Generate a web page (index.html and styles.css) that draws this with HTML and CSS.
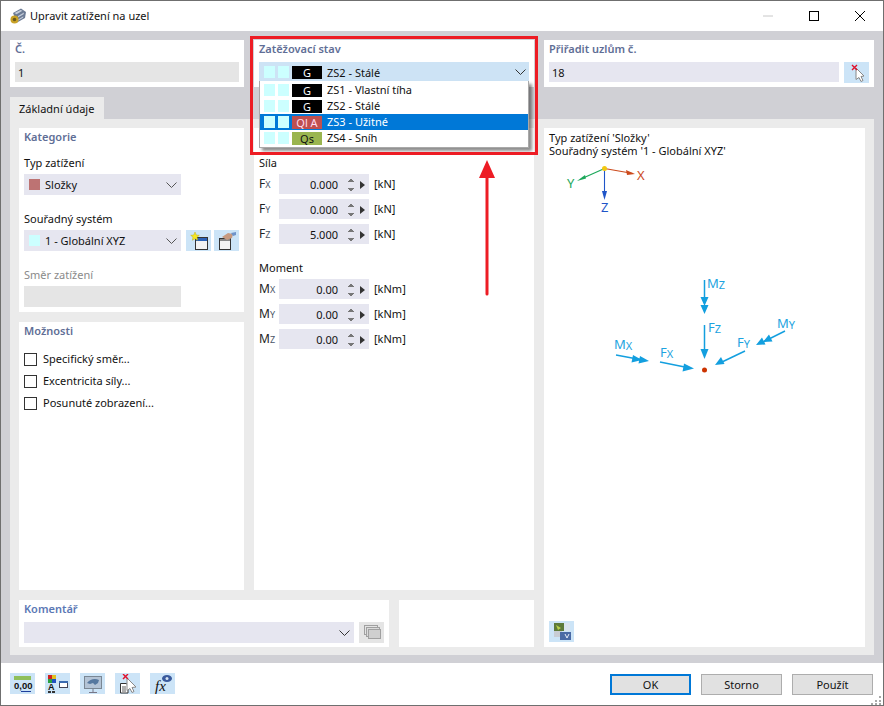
FILE: index.html
```html
<!DOCTYPE html>
<html lang="cs">
<head>
<meta charset="utf-8">
<title>Upravit zatížení na uzel</title>
<link rel="stylesheet" href="styles.css">
</head>
<body>
<div class="dialog">
  <header class="titlebar">
    <svg class="app-icon" width="18" height="18" viewBox="0 0 18 18"><path d="M4 6 12 1.500l5 3.500-1 6-8 4.500z" fill="#6b7a94"/><path d="M5.500 6l6-3 2 .8-6 3.500zM9 9l6-3.500-.4 1.700-5.600 3.300zM9 12.500l5.400-3.200-.3 1.500-5.300 3z" fill="#c3ccd9"/><circle cx="5.500" cy="12.500" r="4" fill="#c9a227"/><circle cx="5.500" cy="12.500" r="1.800" fill="#6b5a1c"/></svg>
    <span class="title-text">Upravit zatížení na uzel</span>
    <div class="window-controls">
      <svg width="12" height="12" viewBox="0 0 12 12"><path d="M1 6h10" stroke="#c8c8c8"/></svg>
      <svg width="12" height="12" viewBox="0 0 12 12"><rect x="1.500" y="1.500" width="9" height="9" fill="none" stroke="#000"/></svg>
      <svg width="12" height="12" viewBox="0 0 12 12"><path d="M1 1l10 10M11 1 1 11" stroke="#000"/></svg>
    </div>
  </header>

  <main class="body">
    <div class="top-row">
      <section class="card">
        <div class="card-title">Č.</div>
        <div class="input disabled">1</div>
      </section>
      <section class="card lc-card">
        <div class="card-title">Zatěžovací stav</div>
        <div class="input lc-field">
          <i class="tile"></i><i class="tile"></i><b class="badge badge-g">G</b><span>ZS2 - Stálé</span>
          <svg class="chevron" width="11" height="6" viewBox="0 0 11 6"><path d="M.5.5l5 5 5-5" fill="none" stroke="#333"/></svg>
        </div>
        <ul class="lc-list">
          <li class="lc-row"><i class="tile"></i><i class="tile"></i><b class="badge badge-g">G</b><span>ZS1 - Vlastní tíha</span></li>
          <li class="lc-row"><i class="tile"></i><i class="tile"></i><b class="badge badge-g">G</b><span>ZS2 - Stálé</span></li>
          <li class="lc-row selected"><i class="tile"></i><i class="tile"></i><b class="badge badge-q">Ql A</b><span>ZS3 - Užitné</span></li>
          <li class="lc-row"><i class="tile"></i><i class="tile"></i><b class="badge badge-s">Qs</b><span>ZS4 - Sníh</span></li>
        </ul>
      </section>
      <section class="card">
        <div class="card-title">Přiřadit uzlům č.</div>
        <div class="input-with-btn">
          <div class="input grow">18</div>
          <button class="icon-btn" type="button"><svg width="20" height="20" viewBox="0 0 20 20"><path d="M9 5l8 8-3 .5 2 4-2 1-2-4-3 2z" fill="#fff" stroke="#888"/><path d="M5 2l5 5M10 2 5 7" stroke="#e0112b" stroke-width="1.400"/></svg></button>
        </div>
      </section>
    </div>

    <div class="tab">Základní údaje</div>

    <div class="panel">
      <div class="left-area">
        <div class="columns">
          <div class="col-left">
            <section class="card card-cat">
              <div class="card-title">Kategorie</div>
              <label class="field-label first">Typ zatížení</label>
              <div class="select w157"><i class="swatch swatch-red"></i><span>Složky</span>
                <svg class="chevron" width="11" height="6" viewBox="0 0 11 6"><path d="M.5.5l5 5 5-5" fill="none" stroke="#555"/></svg></div>
              <label class="field-label">Souřadný systém</label>
              <div class="select-row">
                <div class="select w157"><i class="swatch swatch-cyan"></i><span>1 - Globální XYZ</span>
                  <svg class="chevron" width="11" height="6" viewBox="0 0 11 6"><path d="M.5.5l5 5 5-5" fill="none" stroke="#555"/></svg></div>
                <button class="icon-btn" type="button"><svg width="20" height="20" viewBox="0 0 20 20"><rect x="6.500" y="6.500" width="12" height="12" fill="#f2f2f2" stroke="#333"/><rect x="7" y="7" width="11" height="3" fill="#2a62b8"/><path d="M6 1l1.300 3 3 .3-2.300 2 .7 3L6 7.800 3.300 9.300 4 6.300 1.700 4.300l3-.3z" fill="#f5e625" stroke="#b3a100" stroke-width=".4"/></svg></button>
                <button class="icon-btn" type="button"><svg width="20" height="20" viewBox="0 0 20 20"><rect x="2.500" y="7.500" width="11" height="11" fill="#f2f2f2" stroke="#333"/><rect x="3" y="8" width="10" height="2" fill="#888"/><path d="M5 6l6-4 5 1-1 4-5 2z" fill="#c79a80"/><path d="M14 2l5-1v3l-3 1z" fill="#6f93c9"/></svg></button>
              </div>
              <label class="field-label muted">Směr zatížení</label>
              <div class="input disabled w157 tall"></div>
            </section>
            <section class="card card-opt">
              <div class="card-title">Možnosti</div>
              <div class="checks">
                <label class="check"><i class="box"></i>Specifický směr...</label>
                <label class="check"><i class="box"></i>Excentricita síly...</label>
                <label class="check"><i class="box"></i>Posunuté zobrazení...</label>
              </div>
            </section>
          </div>
          <section class="card col-mid">
            <label class="field-label first">Síla</label>
            <div class="force-row"><span class="sym">F<small>X</small></span><div class="num">0.000<i class="spin"></i><i class="more"></i></div><span class="unit">[kN]</span></div>
            <div class="force-row"><span class="sym">F<small>Y</small></span><div class="num">0.000<i class="spin"></i><i class="more"></i></div><span class="unit">[kN]</span></div>
            <div class="force-row"><span class="sym">F<small>Z</small></span><div class="num">5.000<i class="spin"></i><i class="more"></i></div><span class="unit">[kN]</span></div>
            <label class="field-label">Moment</label>
            <div class="force-row"><span class="sym">M<small>X</small></span><div class="num">0.00<i class="spin"></i><i class="more"></i></div><span class="unit">[kNm]</span></div>
            <div class="force-row"><span class="sym">M<small>Y</small></span><div class="num">0.00<i class="spin"></i><i class="more"></i></div><span class="unit">[kNm]</span></div>
            <div class="force-row"><span class="sym">M<small>Z</small></span><div class="num">0.00<i class="spin"></i><i class="more"></i></div><span class="unit">[kNm]</span></div>
          </section>
        </div>
        <div class="bottom-row">
          <section class="card card-comment">
            <div class="card-title accent">Komentář</div>
            <div class="input-with-btn">
              <div class="select grow"><svg class="chevron" width="11" height="6" viewBox="0 0 11 6"><path d="M.5.5l5 5 5-5" fill="none" stroke="#333"/></svg></div>
              <button class="icon-btn gray" type="button"><svg width="20" height="18" viewBox="0 0 20 18"><rect x="2.500" y="1.500" width="13" height="9" fill="#e4e4e4" stroke="#a0a0a0"/><rect x="4.500" y="3.500" width="13" height="9" fill="#dadada" stroke="#a0a0a0"/><rect x="6.500" y="5.500" width="12" height="9" fill="#cfcfcf" stroke="#a0a0a0"/></svg></button>
            </div>
          </section>
          <section class="card card-spare"></section>
        </div>
      </div>

      <section class="card pane">
        <p class="pane-text">Typ zatížení 'Složky'<br>Souřadný systém '1 - Globální XYZ'</p>
        <svg class="diagram" width="321" height="224" viewBox="544 160 321 224">
          <g stroke-width="1.100">
            <path d="M604.500 168.500 633 173.500" stroke="#cc4a1c"/><path d="M635 174l-9-4 1 5z" fill="#cc4a1c"/>
            <path d="M604.500 168.500 582 178.500" stroke="#1ca85a"/><path d="M577 181l8-6 1 3.600z" fill="#1ca85a"/>
            <path d="M604.500 168.500V196" stroke="#1f55c8"/><path d="M604.500 200l-2.500-9h5z" fill="#1f55c8"/>
          </g>
          <circle cx="604.500" cy="168.500" r="2.500" fill="#f2c811"/>
          <text class="axis ax-x" x="637" y="180">X</text>
          <text class="axis ax-y" x="567" y="188">Y</text>
          <text class="axis ax-z" x="601" y="212">Z</text>
          <g stroke="#139fdf" stroke-width="1.500" fill="none">
            <path d="M704.500 280V302"/><path d="M704.500 325V352"/>
            <path d="M660 362 686 367.300"/><path d="M616 355 640 359.500"/>
            <path d="M745 351 722 362"/><path d="M785 331 763 342"/>
          </g>
          <g fill="#139fdf">
            <path d="M704.500 306l-4-9h8zM704.500 314l-4-9h8z"/>
            <path d="M704.500 359l-4-10h8z"/>
            <path d="M694 368.500l-10-5-1.500 8z"/>
            <path d="M649 361l-9-5-1.500 7.500zM642 360l-9-5-1.500 7.500z"/>
            <path d="M715 365l6-8 3.500 7z"/>
            <path d="M756 345l6-7.500 3.500 7zM763 342l6-7.500 3.500 7z"/>
          </g>
          <circle cx="704.500" cy="370" r="2.500" fill="#cc3300"/>
          <text class="load" x="707" y="288">M<tspan class="load-sub" dy="1">Z</tspan></text>
          <text class="load" x="708" y="332">F<tspan class="load-sub" dy="1">Z</tspan></text>
          <text class="load" x="660" y="357">F<tspan class="load-sub" dy="1">X</tspan></text>
          <text class="load" x="614" y="349">M<tspan class="load-sub" dy="1">X</tspan></text>
          <text class="load" x="737" y="347">F<tspan class="load-sub" dy="1">Y</tspan></text>
          <text class="load" x="777" y="328">M<tspan class="load-sub" dy="1">Y</tspan></text>
        </svg>
        <button class="icon-btn pane-btn" type="button"><svg width="20" height="20" viewBox="0 0 20 20"><rect x="2" y="1" width="10" height="8" fill="#5d7a3a"/><path d="M4 3l5 3-3 2z" fill="#b8d14a"/><rect x="2" y="9" width="8" height="6" fill="#c8ccd4"/><rect x="12" y="1" width="6" height="8" fill="#d9e3ee"/><rect x="8" y="10" width="11" height="8" fill="#4a6aa5"/><path d="M13 12l2 4 2-4" fill="none" stroke="#e8eef8"/></svg></button>
      </section>
    </div>
  </main>

  <footer class="footer">
    <div class="tools">
      <button class="icon-btn" type="button"><svg width="20" height="20" viewBox="0 0 20 20"><rect x="1" y="2" width="17" height="4" fill="#8fbf5a"/><text class="tool-num" x="1" y="15">0,00</text><path d="M8 17.500h10" stroke="#1f3f9c"/></svg></button>
      <button class="icon-btn" type="button"><svg width="22" height="20" viewBox="0 0 22 20"><rect x="1" y="1" width="4" height="4" fill="#d02020"/><rect x="5" y="1" width="4" height="4" fill="#e0c020"/><rect x="1" y="5" width="4" height="4" fill="#2aa040"/><rect x="5" y="5" width="4" height="4" fill="#2050c0"/><text class="tool-a" x="1" y="16">A</text><rect x="1" y="17" width="3" height="2" fill="#333"/><rect x="5" y="17" width="3" height="2" fill="#333"/><rect x="12.500" y="7.500" width="8" height="6" fill="#fff" stroke="#445"/><rect x="12" y="7" width="9" height="2" fill="#3a6ab0"/></svg></button>
      <button class="icon-btn" type="button"><svg width="20" height="20" viewBox="0 0 20 20"><rect x="1.500" y="2.500" width="17" height="12" fill="#b4c4d6" stroke="#7a8794"/><path d="M4 9c3-4 8-5 12-3l-1 3-3 2-2-2-3 1z" fill="#56789f"/><path d="M10 15v3M6 18.500h8" stroke="#778"/></svg></button>
      <button class="icon-btn" type="button"><svg width="20" height="20" viewBox="0 0 20 20"><path d="M2.500 9.500h6l1.500 2v7.500h-7.500z" fill="#fff" stroke="#333"/><path d="M4 13h4M4 15h4M4 17h4" stroke="#333" stroke-width=".8"/><path d="M9 4l9 9-4 .5 2 4-2 1-2-4-3 2z" fill="#fff" stroke="#888"/><path d="M5 0l5 5M10 0 5 5" stroke="#e0112b" stroke-width="1.400"/></svg></button>
      <button class="icon-btn" type="button"><svg width="20" height="20" viewBox="0 0 20 20"><text class="tool-f" x="2" y="17">fx</text><ellipse cx="14" cy="4.500" rx="5" ry="3.500" fill="#3a5a9c"/><circle cx="14" cy="4.500" r="1.500" fill="#d8e4f4"/></svg></button>
    </div>
    <div class="actions">
      <button class="btn btn-default" type="button">OK</button>
      <button class="btn" type="button">Storno</button>
      <button class="btn" type="button">Použít</button>
    </div>
    <svg class="grip" width="11" height="10" viewBox="0 0 11 10"><path d="M8 1h2v2H8zM4 5h2v2H4zM8 5h2v2H8zM0 8h2v2H0zM4 8h2v2H4zM8 8h2v2H8z" fill="#a8a8a8"/></svg>
  </footer>
</div>

<div class="callout"></div>
<svg class="callout-arrow" width="18" height="138" viewBox="0 0 18 138"><path d="M9 0 17 18H10.500V134a1.500 1.500 0 0 1-3 0V18H1z" fill="#ed1c24"/></svg>
</body>
</html>
```

FILE: styles.css
```css
* { box-sizing: border-box; }
html, body { margin: 0; padding: 0; }
body {
  position: relative;
  width: 884px;
  height: 706px;
  overflow: hidden;
  font-family: "Noto Sans", "Open Sans", "Liberation Sans", sans-serif;
  font-size: 11px;
  line-height: 16px;
  color: #111;
  background: #fff;
}
i, b { font-style: normal; font-weight: normal; }
small { font-size: 9px; }
ul { list-style: none; margin: 0; padding: 0; }
p { margin: 0; }
label { display: block; }

.dialog {
  width: 884px;
  height: 706px;
  display: flex;
  flex-direction: column;
  border: 1px solid #6f6f6f;
}

/* title bar */
.titlebar {
  height: 30px;
  flex: none;
  display: flex;
  align-items: center;
  padding-left: 8px;
  background: #fff;
}
.app-icon { flex: none; }
.title-text { margin-left: 3px; font-size: 11px; }
.window-controls {
  margin-left: auto;
  display: flex;
  gap: 34px;
  padding-right: 17px;
}

/* body */
.body {
  height: 632px;
  flex: none;
  padding: 9px;
  padding-bottom: 8px;
  background: #d0d0d5;
}
.top-row {
  display: grid;
  grid-template-columns: 234px 280px 330px;
  gap: 10px;
  height: 47px;
}
.card { background: #fff; padding: 1px 5px 0; }
.card-title {
  color: #5f6e96;
  font-weight: 600;
  height: 16px;
}
.card-title.accent { color: #5b78b5; }
.top-row .card-title { margin-bottom: 5px; }

.input {
  height: 20px;
  line-height: 21px;
  padding-left: 3px;
  background: #e6e6f0;
}
.input.disabled { background: #e5e5e5; }
.input.tall { height: 21px; }
.grow { flex: 1; }
.input-with-btn { display: flex; gap: 5px; }
.icon-btn {
  flex: none;
  width: 25px;
  height: 21px;
  padding: 0;
  border: 0;
  background: #cce4f7;
  display: flex;
  align-items: center;
  justify-content: center;
}
.icon-btn.gray { background: #e5e5e5; }

/* load case selector */
.lc-card { position: relative; }
.lc-field {
  display: flex;
  align-items: center;
  padding-left: 5px;
  background: #cde3f5;
  position: relative;
}
.tile { width: 11px; height: 12px; background: #ccffff; margin-right: 3px; flex: none; }
.badge {
  width: 30px;
  height: 13px;
  line-height: 13px;
  text-align: center;
  flex: none;
  margin-right: 5px;
}
.badge-g { background: #000; color: #fff; }
.badge-q { background: #bf5050; color: #fde; }
.badge-s { background: #9ab54f; color: #111; }
.lc-list {
  position: absolute;
  left: 5px;
  top: 41px;
  width: 270px;
  padding-top: 1px;
  padding-bottom: 1px;
  background: #fff;
  border: 1px solid #a9a9a9;
  border-top: 0;
  box-shadow: 3px 3px 3px rgba(0, 0, 0, .45);
  z-index: 2;
}
.lc-row {
  height: 16px;
  line-height: 16px;
  display: flex;
  align-items: center;
  padding-left: 4px;
}
.lc-row.selected { background: #0078d7; color: #fff; }

/* tab */
.tab {
  width: 94px;
  height: 22px;
  margin-top: 10px;
  line-height: 23px;
  padding-left: 9px;
  background: #ebebeb;
}

/* panel */
.panel {
  height: 536px;
  padding: 9px;
  padding-bottom: 8px;
  background: #ebebeb;
  display: flex;
  gap: 10px;
}
.left-area { width: 515px; display: flex; flex-direction: column; gap: 10px; }
.columns { display: flex; gap: 10px; height: 462px; }
.col-left { width: 225px; display: flex; flex-direction: column; gap: 10px; }
.card-cat { height: 184px; }
.card-opt { height: 268px; }
.col-mid { width: 280px; padding-top: 27px; }

.field-label { height: 16px; margin-top: 16px; margin-bottom: 3px; }
.field-label.first { margin-top: 10px; }
.col-mid .field-label.first { margin-top: 0; }
.field-label.muted { color: #8a8a8a; }

.select {
  height: 21px;
  display: flex;
  align-items: center;
  padding-left: 5px;
  padding-right: 4px;
  background: #e6e6f0;
}
.w157 { width: 157px; }
.chevron { margin-left: auto; flex: none; margin-right: 0; }
.lc-field .chevron { margin-right: 3px; }
.select-row { display: flex; }
.select-row .icon-btn { margin-left: 5px; }
.select-row .icon-btn + .icon-btn { margin-left: 3px; }
.swatch { width: 11px; height: 11px; margin-right: 5px; flex: none; }
.swatch-red { background: #bd7373; }
.swatch-cyan { background: #ccffff; }

.checks { margin-top: 9px; }
.check { height: 22px; display: flex; align-items: center; }
.box { width: 13px; height: 13px; border: 1px solid #333; margin-right: 6px; flex: none; }

/* forces */
.force-row { display: flex; align-items: center; height: 20px; margin-bottom: 5px; }
.sym { width: 20px; flex: none; color: #222; font-size: 12px; }
.sym small { color: #4b5568; }
.num {
  width: 90px;
  height: 20px;
  display: flex;
  align-items: center;
  justify-content: flex-end;
  background: #e6e6f0;
  padding-right: 4px;
  padding-top: 1px;
}
.spin {
  width: 6px;
  height: 14px;
  margin-left: 10px;
  flex: none;
  background:
    linear-gradient(to bottom right, transparent 50%, #777 50%) left top / 3px 4px no-repeat,
    linear-gradient(to bottom left, transparent 50%, #777 50%) right top / 3px 4px no-repeat,
    linear-gradient(to top right, transparent 50%, #777 50%) left bottom / 3px 4px no-repeat,
    linear-gradient(to top left, transparent 50%, #777 50%) right bottom / 3px 4px no-repeat;
}
.more {
  width: 0;
  height: 0;
  margin-left: 6px;
  flex: none;
  border-left: 5px solid #333;
  border-top: 4px solid transparent;
  border-bottom: 4px solid transparent;
}
.unit { margin-left: 5px; }
.force-row + .field-label { margin-top: 16px; }

/* bottom cards */
.bottom-row { display: flex; gap: 10px; height: 47px; }
.card-comment { width: 370px; }
.card-comment .card-title { margin-bottom: 5px; }
.card-spare { width: 135px; }

/* right pane */
.pane {
  width: 321px;
  display: flex;
  flex-direction: column;
  align-items: flex-start;
  padding: 3px 0 5px 5px;
}
.pane-text { line-height: 13px; height: 29px; }
.diagram { display: block; margin-left: -5px; flex: none; }
.axis { font-family: "Noto Sans", sans-serif; font-size: 13px; }
.ax-x { fill: #cc4a1c; }
.ax-y { fill: #1ca85a; }
.ax-z { fill: #1f55c8; }
.load { font-family: "Noto Sans", sans-serif; font-size: 13px; fill: #1ca3e0; }
.load-sub { font-size: 11px; }
.pane-btn { margin-top: auto; }

/* footer */
.footer {
  flex: 1;
  display: flex;
  align-items: flex-start;
  padding: 10px 10px 0 9px;
  background: #fff;
  position: relative;
}
.tools { display: flex; gap: 10px; }
.tool-num { font-family: "Liberation Sans", sans-serif; font-size: 9.500px; font-weight: 700; fill: #111; }
.tool-a { font-family: "Liberation Sans", sans-serif; font-size: 9px; font-weight: 700; fill: #111; }
.tool-f { font-family: "Liberation Serif", serif; font-size: 15px; font-style: italic; fill: #111; }
.actions { margin-left: auto; display: flex; gap: 10px; margin-top: 1px; }
.btn {
  width: 81px;
  height: 21px;
  padding: 0;
  font: inherit;
  color: #111;
  background: #e1e1e1;
  border: 1px solid #adadad;
}
.btn-default { border: 2px solid #0078d7; }
.grip { position: absolute; right: 1px; bottom: 0; }

/* annotation overlay */
.callout {
  position: absolute;
  left: 250px;
  top: 36px;
  width: 288px;
  height: 119px;
  border: 3px solid #ed1c24;
  z-index: 5;
}
.callout-arrow { position: absolute; left: 478px; top: 160px; z-index: 5; }
```
